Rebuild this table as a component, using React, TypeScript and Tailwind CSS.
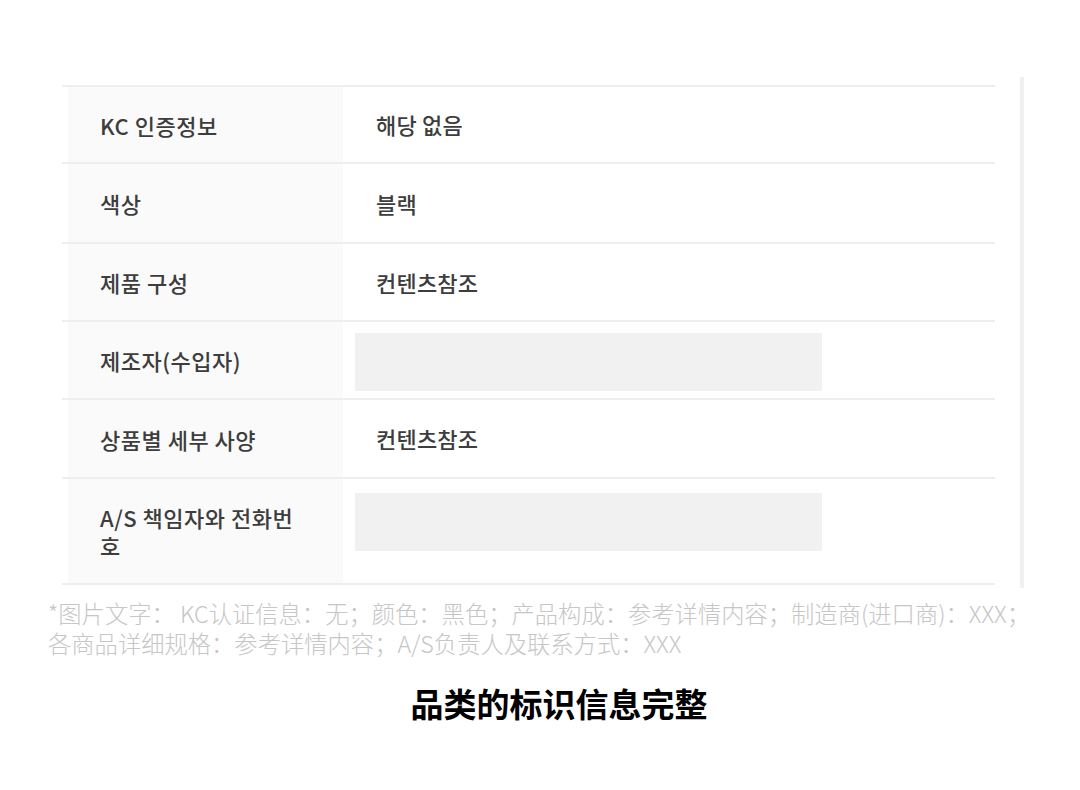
const rows = [
  { label: "KC 인증정보", value: "해당 없음", h: "h-[77px]" },
  { label: "색상", value: "블랙", h: "h-[80px]" },
  { label: "제품 구성", value: "컨텐츠참조", h: "h-[78px]" },
  { label: "제조자(수입자)", value: null, h: "h-[78px]", boxTop: "mt-[11px]" },
  { label: "상품별 세부 사양", value: "컨텐츠참조", h: "h-[79px]" },
  { label: "A/S 책임자와 전화번호", value: null, h: "h-[106px]", boxTop: "mt-[14px]" },
];

function InfoRow({ label, value, h, boxTop }: { label: string; value: string | null; h: string; boxTop?: string }) {
  return (
    <div className={`flex ${h} border-b-2 border-[#eeeeee] pl-[6px]`}>
      <div className="flex w-[275px] items-center bg-[#fafafa] pl-[32px] pr-[35px] text-[22px] font-medium leading-[28px] tracking-[0.5px] text-[#3d3d3d]">
        {label}
      </div>
      {value ? (
        <div className="flex items-center pl-[33px] text-[22px] font-medium tracking-[0.2px] text-[#3d3d3d]">{value}</div>
      ) : (
        <div className={`${boxTop} ml-[12px] h-[58px] w-[467px] bg-[#f1f1f1]`} />
      )}
    </div>
  );
}

export default function App() {
  return (
    <div
      className="h-[790px] w-[1080px] bg-white"
      style={{ fontFamily: '"Noto Sans CJK KR", "Noto Sans CJK SC", sans-serif' }}
    >
      <div className="flex pt-[77px]">
        <div className="ml-[62px] mt-[8px] w-[933px] border-t-2 border-[#eeeeee]">
          {rows.map((r) => (
            <InfoRow key={r.label} {...r} />
          ))}
        </div>
        <div className="ml-[25px] h-[511px] w-[4px] bg-[#f0f0f0]" />
      </div>

      <p
        className="mt-[10px] pl-[48px] pr-[20px] text-[23.3px] font-light leading-[30px] text-[#c6c6c6]"
        style={{ fontFamily: '"Noto Sans CJK SC", sans-serif' }}
      >
        *图片文字： KC认证信息：无；颜色：黑色；产品构成：参考详情内容；制造商(进口商)：XXX；
        <br />
        各商品详细规格：参考详情内容；A/S负责人及联系方式：XXX
      </p>

      <h1
        className="mt-[23px] text-center text-[33px] font-bold leading-[44px] text-black"
        style={{ fontFamily: '"Noto Sans CJK SC", sans-serif' }}
      >
        <span className="ml-[38px]">品类的标识信息完整</span>
      </h1>
    </div>
  );
}
